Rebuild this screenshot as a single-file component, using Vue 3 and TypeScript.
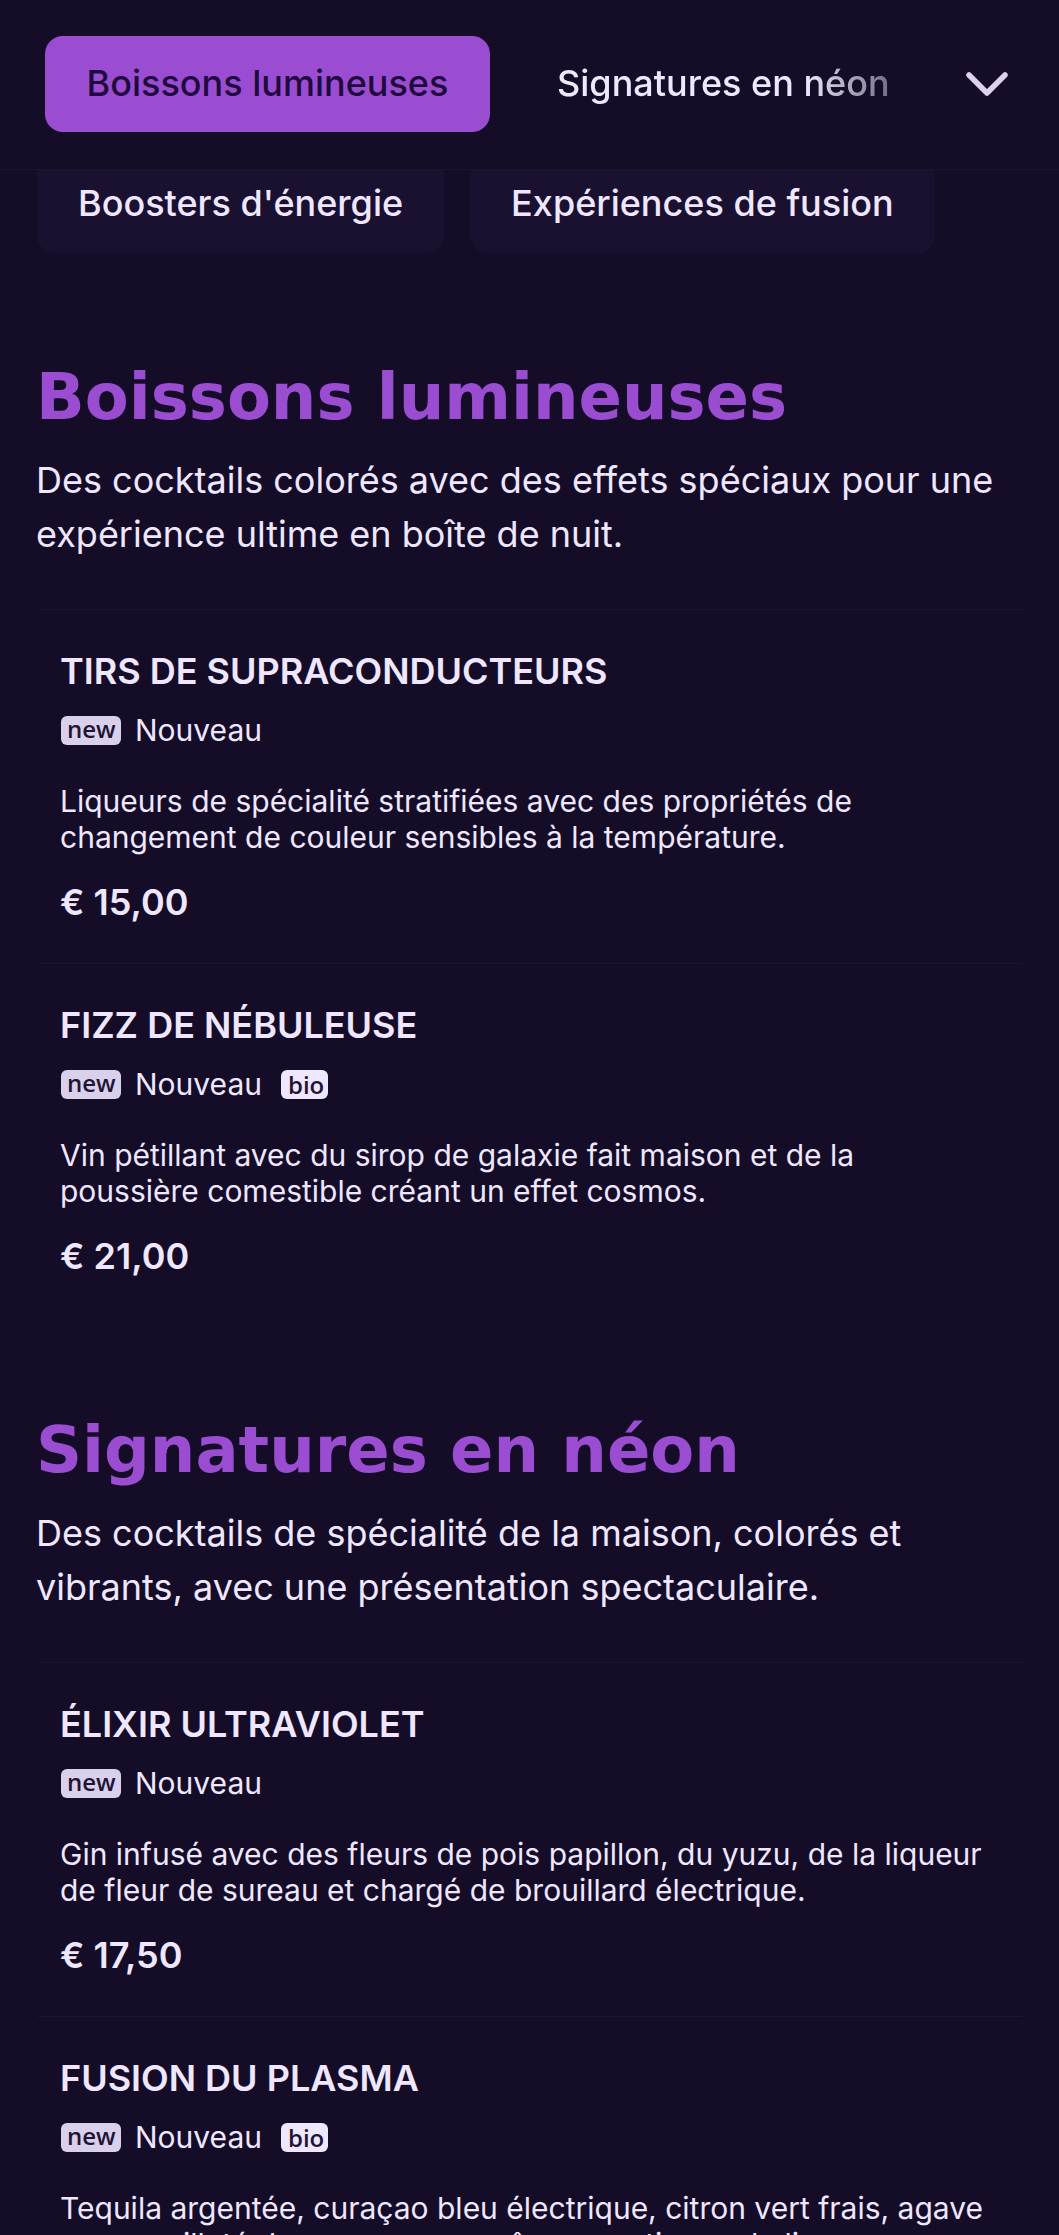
<script setup lang="ts">
interface Item { name: string; bio: boolean; desc: string[]; price: string }
interface Section { title: string; intro: string; items: Item[] }

const sections: Section[] = [
  {
    title: 'Boissons lumineuses',
    intro: 'Des cocktails colorés avec des effets spéciaux pour une expérience ultime en boîte de nuit.',
    items: [
      { name: 'Tirs de supraconducteurs', bio: false, desc: ['Liqueurs de spécialité stratifiées avec des propriétés de', 'changement de couleur sensibles à la température.'], price: '€ 15,00' },
      { name: 'Fizz de nébuleuse', bio: true, desc: ['Vin pétillant avec du sirop de galaxie fait maison et de la', 'poussière comestible créant un effet cosmos.'], price: '€ 21,00' },
    ],
  },
  {
    title: 'Signatures en néon',
    intro: 'Des cocktails de spécialité de la maison, colorés et vibrants, avec une présentation spectaculaire.',
    items: [
      { name: 'Élixir ultraviolet', bio: false, desc: ['Gin infusé avec des fleurs de pois papillon, du yuzu, de la liqueur', 'de fleur de sureau et chargé de brouillard électrique.'], price: '€ 17,50' },
      { name: 'Fusion du plasma', bio: true, desc: ['Tequila argentée, curaçao bleu électrique, citron vert frais, agave', 'sucre pailleté de mousse aux arômes exotiques de lime.'], price: '€ 19,00' },
    ],
  },
]
</script>

<template>
  <div class="page">
    <header class="topbar">
      <button class="pill active">Boissons lumineuses</button>
      <div class="fade"><span class="pill-text">Signatures en néon</span></div>
      <svg class="chevron" viewBox="0 0 44 28" width="44" height="28" aria-hidden="true">
        <path d="M4 5 L22 23 L40 5" fill="none" stroke="#dcd2f0" stroke-width="5.5" stroke-linecap="round" stroke-linejoin="round" />
      </svg>
    </header>

    <nav class="subtabs">
      <span class="tab">Boosters d'énergie</span>
      <span class="tab">Expériences de fusion</span>
    </nav>

    <main class="content">
      <section v-for="s in sections" :key="s.title" class="section">
        <h2 class="title">{{ s.title }}</h2>
        <p class="intro">{{ s.intro }}</p>
        <article v-for="it in s.items" :key="it.name" class="item">
          <h3 class="name">{{ it.name }}</h3>
          <div class="tags">
            <span class="badge new">new</span>
            <span class="tag-label">Nouveau</span>
            <span v-if="it.bio" class="badge bio">bio</span>
          </div>
          <p class="desc"><span v-for="l in it.desc" :key="l" class="line">{{ l }}</span></p>
          <div class="price">{{ it.price }}</div>
        </article>
      </section>
    </main>
  </div>
</template>

<style>
html, body { margin: 0; background: #150d28; }
</style>

<style scoped>
.page {
  width: 1059px;
  height: 2235px;
  overflow: hidden;
  background: #150d28;
  color: #efe7ff;
  font-family: Inter, "Noto Sans", sans-serif;
}
.topbar {
  box-sizing: border-box;
  height: 170px;
  padding: 36px 0 0 45px;
  display: flex;
  align-items: flex-start;
  border-bottom: 1px solid #1b1431;
}
.pill {
  box-sizing: border-box;
  width: 445px;
  height: 96px;
  padding: 0 0 3px;
  border: 0;
  border-radius: 18px;
  background: #9b4dd1;
  color: #1f0a3d;
  font: 500 36px Inter, sans-serif;
}
.fade {
  margin-left: 67px;
  width: 332px;
  height: 93px;
  display: flex;
  align-items: center;
  white-space: nowrap;
  font-size: 36px;
  font-weight: 500;
  -webkit-mask-image: linear-gradient(90deg, #000 75%, rgba(0,0,0,0.45) 100%);
  mask-image: linear-gradient(90deg, #000 75%, rgba(0,0,0,0.45) 100%);
}
.chevron { margin: 34px 0 0 76px; }
.subtabs {
  display: flex;
  gap: 26px;
  padding-left: 37px;
}
.tab {
  box-sizing: border-box;
  height: 83px;
  padding: 0 41px 18px;
  display: flex;
  align-items: center;
  font-size: 36px;
  font-weight: 500;
  background: #1a1130;
  border-radius: 0 0 18px 18px;
}
.content { padding: 0 37px 0 36px; }
.section { padding-top: 107px; }
.section + .section { padding-top: 96px; }
.title {
  margin: 0;
  font: 700 64px/74px "DejaVu Sans", sans-serif;
  color: #9b4dd1;
  white-space: nowrap;
}
.intro {
  margin: 19px 0 0;
  font-size: 36px;
  line-height: 54px;
}
.item {
  margin-top: 48px;
  margin-left: 2px;
  height: 354px;
  padding: 41px 24px 0 22px;
  box-sizing: border-box;
  border-top: 1px solid #1c1433;
}
.section .item + .item { margin-top: 0; }
.name {
  margin: 0;
  font-size: 36px;
  line-height: 40px;
  font-weight: 600;
  text-transform: uppercase;
}
.tags {
  margin-top: 21px;
  display: flex;
  align-items: center;
  height: 36px;
}
.badge {
  box-sizing: border-box;
  height: 29px;
  padding: 0 7px;
  border-radius: 6px;
  font: 600 24px/26px "Open Sans", sans-serif;
  color: #1f1533;
}
.new { background: #d9d0ec; width: 60px; padding: 0 6px; margin-left: 1px; }
.bio { background: #efe7ff; margin-left: 19px; width: 47px; line-height: 30px; }
.tag-label { margin-left: 14px; font-size: 30px; }
.desc { margin: 35px 0 0; font-size: 30px; line-height: 36px; }
.line { display: block; white-space: nowrap; }
.price { margin-top: 26px; font-size: 36px; line-height: 42px; font-weight: 600; }
</style>
